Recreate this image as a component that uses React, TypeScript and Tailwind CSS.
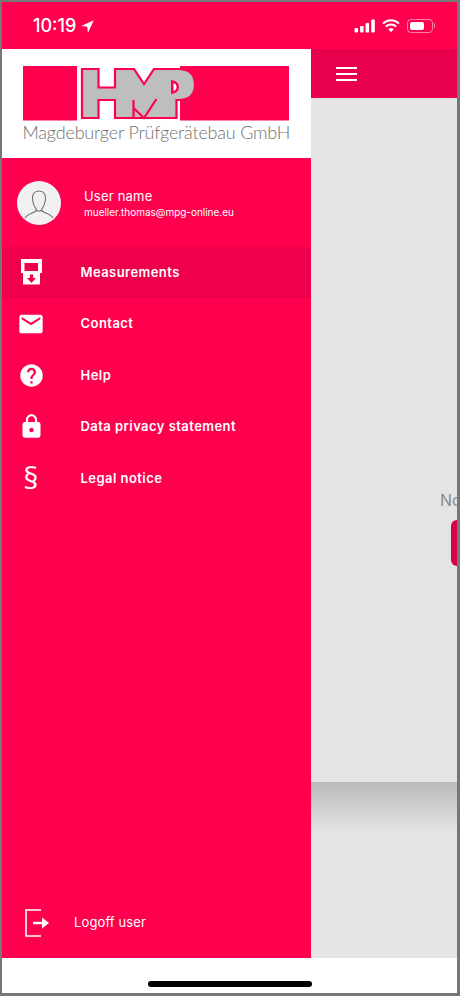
import { MdEmail, MdHelp, MdLock } from 'react-icons/md'

function LocationArrow() {
  return (
    <svg width="13" height="13" viewBox="0 0 12 12" className="ml-[5px] mt-[1px]">
      <path d="M11.8 0.2 L0.2 5.6 L5.8 6.2 L6.4 11.8 Z" fill="#fff" />
    </svg>
  )
}

function StatusIcons() {
  return (
    <div className="flex items-center">
      <svg width="22" height="14" viewBox="0 0 22 14">
        <rect x="0.5" y="9" width="3.6" height="4.5" rx="1" fill="#fff" />
        <rect x="6" y="7" width="3.6" height="6.5" rx="1" fill="#fff" />
        <rect x="11.5" y="4" width="3.6" height="9.5" rx="1" fill="#fff" />
        <rect x="17.2" y="0.5" width="3.6" height="13" rx="1" fill="#fff" />
      </svg>
      <svg width="18" height="14" viewBox="0 0 18 14" className="ml-[6px]">
        <path d="M1 4.6 A11.5 11.5 0 0 1 17 4.6" fill="none" stroke="#fff" strokeWidth="2" />
        <path d="M3.8 7.6 A7.5 7.5 0 0 1 14.2 7.6" fill="none" stroke="#fff" strokeWidth="2" />
        <path d="M6.4 10.3 A3.8 3.8 0 0 1 11.6 10.3 L9 13.2 Z" fill="#fff" />
      </svg>
      <div className="ml-[7px] flex items-center">
        <div className="flex h-[14px] w-[26px] items-center rounded-[4px] border border-white/50 p-[2px]">
          <div className="h-full w-[14px] rounded-[2px] bg-white" />
        </div>
        <div className="ml-[1px] h-[5px] w-[1.5px] rounded-r-sm bg-white/50" />
      </div>
    </div>
  )
}

function HmpLogo() {
  return (
    <svg width="266" height="56" viewBox="0 0 266 56" className="block">
      <rect x="0" y="0" width="54" height="54.5" fill="#ff004f" />
      <rect x="157" y="0" width="109" height="54.5" fill="#ff004f" />
      <path
        d="M59 3 H75.5 V21.5 H92 V3 H111 L121 18 L131 3 H155 Q172 3 172 19 Q172 34 155 34 H153.5 V52 H92 V34 H75.5 V52 H59 Z"
        fill="#bebebe"
        stroke="#ff004f"
        strokeWidth="2.2"
        strokeLinejoin="miter"
      />
      <path d="M110.5 34 V52 M110.5 42 L121 52 L133.5 33" fill="none" stroke="#ff004f" strokeWidth="2.2" />
      <path d="M148 14 Q156 15 156 21 Q156 27 148 28 Z" fill="#ff004f" />
      <path d="M150.5 17 Q153.5 18 153.5 21 Q153.5 24 150.5 25 Z" fill="#fff" />
    </svg>
  )
}

function Avatar() {
  return (
    <div className="flex h-[44px] w-[44px] shrink-0 items-center justify-center overflow-hidden rounded-full bg-[#f1f1f1]">
      <svg width="44" height="44" viewBox="0 0 44 44" fill="none" stroke="#6f6f6f" strokeWidth="1.1">
        <path d="M22 10 C17 10 15 14 15.5 18 C16 22 17.5 26 19 27.5 V30 C16 32.5 10 33 8 37" />
        <path d="M22 10 C27 10 29 14 28.5 18 C28 22 26.5 26 25 27.5 V30 C28 32.5 34 33 36 37" />
        <path d="M19 29 Q22 31.5 25 29" />
      </svg>
    </div>
  )
}

function DeviceIcon() {
  return (
    <svg width="21" height="26" viewBox="0 0 21 26">
      <path d="M0 0 H21 V14 H19 V25.5 H2 V14 H0 Z" fill="#fff" />
      <rect x="3.5" y="4" width="13.5" height="8" fill="#ee004c" />
      <path d="M8.8 15.5 H12.2 V19 H15 L10.5 24 L6 19 H8.8 Z" fill="#ee004c" />
    </svg>
  )
}

function LogoffIcon() {
  return (
    <svg width="24" height="28" viewBox="0 0 24 28" fill="none" stroke="#fff">
      <path d="M16 1 H1 V27 H16" strokeWidth="1.6" />
      <path d="M8 14 H20" strokeWidth="2.4" />
      <path d="M17 8.5 L24 14 L17 19.5 Z" fill="#fff" strokeWidth="0" />
    </svg>
  )
}

const items = [
  { label: 'Measurements', icon: <DeviceIcon />, active: true },
  { label: 'Contact', icon: <MdEmail size={28} color="#fff" /> },
  { label: 'Help', icon: <MdHelp size={27} color="#fff" /> },
  { label: 'Data privacy statement', icon: <MdLock size={27} color="#fff" /> },
  {
    label: 'Legal notice',
    icon: <span className="font-['Open_Sans',sans-serif] text-[30px] leading-none font-normal text-white">§</span>,
  },
]

export default function App() {
  return (
    <div className="flex h-[996px] w-[460px] flex-col overflow-hidden bg-[#777] pt-[2px] pr-[3px] pb-[3px] pl-[2px] font-['Inter',sans-serif]">
      <div className="flex h-[47px] shrink-0 items-center justify-between bg-[#ff004f] pr-[22px] pl-[31px] text-white">
        <div className="flex items-center">
          <span className="text-[18px] font-medium">10:19</span>
          <LocationArrow />
        </div>
        <StatusIcons />
      </div>

      <div className="flex min-h-0 flex-1">
        <div className="flex w-[309px] shrink-0 flex-col bg-[#ff004f]">
          <div className="h-[109px] bg-white pt-[16.5px] pl-[20.5px]">
            <HmpLogo />
            <div className="-mt-[1px] w-[266px] font-['Lato',sans-serif] text-[18px] leading-[22px] font-light tracking-[-0.2px] whitespace-nowrap text-[#707070]">
              Magdeburger Prüfgerätebau GmbH
            </div>
          </div>

          <div className="flex h-[88.5px] items-start pt-[23px] pl-[15px]">
            <Avatar />
            <div className="ml-[23px] pt-[7px] text-white">
              <div className="text-[13px] leading-[16px] tracking-[0.2px]">User name</div>
              <div className="mt-[1px] text-[10px] leading-[14px] tracking-[-0.02px]">mueller.thomas@mpg-online.eu</div>
            </div>
          </div>

          {items.map((item) => (
            <div
              key={item.label}
              className={`flex h-[51.5px] items-center ${item.active ? 'bg-[#ee004c]' : ''}`}
            >
              <div className="flex w-[58px] shrink-0 justify-center">{item.icon}</div>
              <span className="ml-[20.5px] text-[13px] font-semibold tracking-[0.45px] text-white">{item.label}</span>
            </div>
          ))}

          <div className="mt-auto flex items-center pb-[21px] pl-[23px]">
            <LogoffIcon />
            <span className="ml-[25px] text-[13px] tracking-[0.12px] text-white">Logoff user</span>
          </div>
        </div>

        <div className="flex min-w-0 flex-1 flex-col overflow-hidden bg-[#e4e4e4]">
          <div className="flex h-[49px] shrink-0 items-center bg-[#e8004c] pl-[25px]">
            <div className="flex w-[21px] flex-col gap-[4px]">
              <div className="h-[2px] bg-white" />
              <div className="h-[2px] bg-white" />
              <div className="h-[2px] bg-white" />
            </div>
          </div>
          <div className="pt-[392px]">
            <div className="ml-[129px] w-max text-[16px] leading-[20px] whitespace-nowrap text-[#8a8a8a]">No data</div>
            <div className="mt-[10px] ml-[140px] h-[46px] w-[120px] rounded-[6px] bg-[#d6004f]" />
            <div className="mt-[216px] h-[50px] bg-gradient-to-b from-[#bababa] to-[#e4e4e4]" />
          </div>
        </div>
      </div>

      <div className="flex h-[35px] shrink-0 justify-center bg-white pt-[23px]">
        <div className="h-[6px] w-[164px] rounded-full bg-black" />
      </div>
    </div>
  )
}
